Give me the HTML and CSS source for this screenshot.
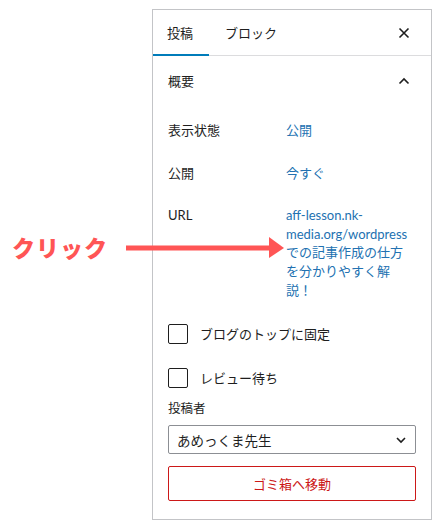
FILE: index.html
```html
<!DOCTYPE html>
<html lang="ja">
<head>
<meta charset="utf-8">
<link rel="stylesheet" href="styles.css">
</head>
<body>
<div class="annotation">
  <span class="annotation-label">クリック</span>
  <svg class="annotation-arrow" width="160" height="22" viewBox="0 0 160 22">
    <rect x="0" y="8.5" width="145" height="5" fill="#ff5555"/>
    <polygon points="143,0 158,11 143,21" fill="#ff5555"/>
  </svg>
</div>
<div class="panel">
  <div class="tabs">
    <div class="tab tab-active">投稿</div>
    <div class="tab">ブロック</div>
    <div class="tabs-spacer"></div>
    <div class="icon-btn">
      <svg width="12" height="12" viewBox="0 0 12 12"><path d="M1.5 1.5 L10.5 10.5 M10.5 1.5 L1.5 10.5" stroke="#1e1e1e" stroke-width="1.6" fill="none"/></svg>
    </div>
  </div>
  <div class="section-head">
    <span>概要</span>
    <div class="icon-btn">
      <svg width="12" height="8" viewBox="0 0 12 8"><path d="M1.5 6.5 L6 2 L10.5 6.5" stroke="#1e1e1e" stroke-width="1.6" fill="none"/></svg>
    </div>
  </div>
  <div class="section-body">
    <div class="row row-1">
      <div class="label">表示状態</div>
      <a class="value">公開</a>
    </div>
    <div class="row row-2">
      <div class="label">公開</div>
      <a class="value">今すぐ</a>
    </div>
    <div class="row row-3">
      <div class="label">URL</div>
      <a class="value">aff-lesson.nk-<br>media.org/wordpress<br>での記事作成の仕方<br>を分かりやすく解<br>説！</a>
    </div>
    <label class="check check-1"><span class="box"></span>ブログのトップに固定</label>
    <label class="check check-2"><span class="box"></span>レビュー待ち</label>
    <div class="author-label">投稿者</div>
    <div class="select">
      <span>あめっくま先生</span>
      <svg width="12" height="8" viewBox="0 0 12 8"><path d="M2 2 L6 6 L10 2" stroke="#1e1e1e" stroke-width="1.6" fill="none"/></svg>
    </div>
    <div class="trash">ゴミ箱へ移動</div>
  </div>
</div>
</body>
</html>
```

FILE: styles.css
```css
* { box-sizing: border-box; }
html, body { margin: 0; padding: 0; background: #fff; }
body {
  font-family: "Lato", "Noto Sans CJK JP", "Noto Sans", sans-serif;
  font-size: 13px;
  color: #1e1e1e;
  position: relative;
  width: 444px;
  height: 530px;
  padding: 9px 0 0 152px;
}
.annotation {
  position: absolute;
  left: 12px;
  top: 235px;
  display: flex;
  align-items: center;
  gap: 18px;
}
.annotation-label {
  font-family: "Noto Sans CJK JP", sans-serif;
  font-weight: 900;
  font-size: 23px;
  line-height: 24px;
  letter-spacing: 1px;
  color: #ff5555;
}
.annotation-arrow { display: block; margin-top: 2px; }

.panel {
  width: 280px;
  height: 511px;
  border: 1px solid #c3c4c7;
  display: flex;
  flex-direction: column;
}
.tabs {
  display: flex;
  align-items: stretch;
  height: 46px;
  border-bottom: 1px solid #dcdcde;
}
.tab {
  position: relative;
  display: flex;
  align-items: center;
  padding: 0 16px 0 14px;
  line-height: 18px;
}
.tab + .tab { padding-left: 16px; }
.tab-active::after {
  content: "";
  position: absolute;
  left: 0; right: 0; bottom: -1px;
  height: 2px;
  background: #007cba;
}
.tabs-spacer { flex: 1; }
.icon-btn {
  width: 54px;
  display: flex;
  align-items: center;
  justify-content: center;
}
.section-head {
  display: flex;
  align-items: center;
  justify-content: space-between;
  height: 50px;
  padding-left: 15px;
  line-height: 18px;
}
.section-head .icon-btn { height: 50px; }
.section-body {
  display: flex;
  flex-direction: column;
  padding: 15px 15px 0 15px;
}
.row {
  display: flex;
  line-height: 18px;
}
.row-2 { margin-top: 24px; }
.row-3 { margin-top: 24px; }
.label { width: 118px; flex: none; }
.value { color: #2271b1; line-height: 18.6px; }
.check {
  display: flex;
  align-items: center;
  gap: 12px;
  line-height: 18px;
}
.check-1 { margin-top: 25px; }
.check-2 { margin-top: 24px; }
.box {
  width: 20px;
  height: 20px;
  border: 1.5px solid #1e1e1e;
  border-radius: 2px;
  flex: none;
}
.author-label {
  margin-top: 12px;
  line-height: 18px;
  font-size: 12.5px;
}
.select {
  margin-top: 7px;
  height: 29px;
  border: 1px solid #8c8f94;
  border-radius: 2px;
  display: flex;
  align-items: center;
  justify-content: space-between;
  padding: 0 8px 0 8px;
  font-size: 13.5px;
}
.trash {
  margin-top: 12px;
  height: 35px;
  border: 1px solid #cc1818;
  border-radius: 2px;
  color: #cc1818;
  display: flex;
  align-items: center;
  justify-content: center;
}
```
